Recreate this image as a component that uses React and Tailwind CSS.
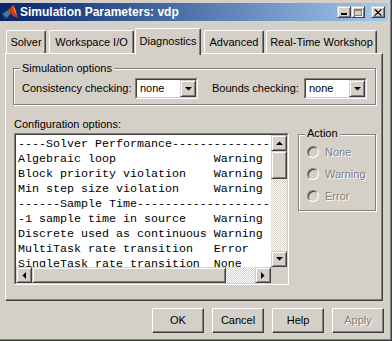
import React from 'react';

const raised =
  'border border-t-white border-l-white border-r-[#404040] border-b-[#404040] shadow-[inset_-1px_-1px_#808080]';
const raisedSmall =
  'border border-t-[#d4d0c8] border-l-[#d4d0c8] border-r-[#404040] border-b-[#404040] shadow-[inset_1px_1px_#fff,inset_-1px_-1px_#808080] bg-[#d4d0c8]';
const etched = 'border border-[#808080] shadow-[inset_1px_1px_#fff,1px_1px_#fff]';
const checker = 'bg-[repeating-conic-gradient(#fff_0_25%,#d4d0c8_0_50%)] bg-[length:2px_2px]';
const disabledText = 'text-[#808080] [text-shadow:1px_1px_0_#fff]';

const Arrow = ({ dir }) => {
  const pts = {
    up: '0,4 7,4 3.5,0.5',
    down: '0,0 7,0 3.5,3.5',
    left: '4,0 4,7 0.5,3.5',
    right: '0,0 0,7 3.5,3.5',
  }[dir];
  const horiz = dir === 'left' || dir === 'right';
  return (
    <svg width={horiz ? 4 : 7} height={horiz ? 7 : 4} viewBox={horiz ? '0 0 4 7' : '0 0 7 4'}>
      <polygon points={pts} fill="#000" />
    </svg>
  );
};

const ScrollBtn = ({ dir }) => (
  <div className={`${raisedSmall} w-[16px] h-[16px] flex items-center justify-center shrink-0`}>
    <Arrow dir={dir} />
  </div>
);

const Combo = ({ value }) => (
  <div className="w-[63px] h-[21px] border border-t-[#808080] border-l-[#808080] border-r-white border-b-white">
    <div className="h-full border border-t-[#404040] border-l-[#404040] border-r-[#d4d0c8] border-b-[#d4d0c8] bg-white flex items-center">
      <span className="flex-1 pl-[3px]">{value}</span>
      <div className={`${raisedSmall} w-[16px] h-[17px] flex items-center justify-center`}>
        <Arrow dir="down" />
      </div>
    </div>
  </div>
);

const Radio = ({ label }) => (
  <div className="flex items-center h-[22px]">
    <div className="w-[12px] h-[12px] rounded-full border border-t-[#808080] border-l-[#808080] border-r-white border-b-white bg-[#d4d0c8] shadow-[inset_1px_1px_#404040]" />
    <span className={`ml-[6px] ${disabledText}`}>{label}</span>
  </div>
);

// 36 columns fit in the visible part of the list
const lines = [
  '----Solver Performance--------------',
  'Algebraic loop              Warning',
  'Block priority violation    Warning',
  'Min step size violation     Warning',
  '------Sample Time-------------------',
  '-1 sample time in source    Warning',
  'Discrete used as continuous Warning',
  'MultiTask rate transition   Error',
  'SingleTask rate transition  None',
];

const tabs = [
  { label: 'Solver', w: 'w-[40px]', ml: 'ml-[6px]' },
  { label: 'Workspace I/O', w: 'w-[85px]', ml: 'ml-[3px]' },
  { label: 'Diagnostics', w: 'w-[66px]', ml: 'ml-[1px]', active: true },
  { label: 'Advanced', w: 'w-[60px]', ml: 'ml-[3px]' },
  { label: 'Real-Time Workshop', w: 'w-[111px]', ml: 'ml-[2px]' },
];

export default function App() {
  return (
    <div className="w-[392px] h-[341px] bg-[#d4d0c8] overflow-hidden text-black text-[11px] leading-[13px] font-['Liberation_Sans',Arial,sans-serif] shadow-[inset_-1px_-1px_#404040,inset_-2px_-2px_#808080] flex flex-col">
      {/* Title bar */}
      <div className="mt-[3px] mr-[4px] h-[18px] flex items-center bg-gradient-to-r from-[#0a246a] to-[#a6caf0]">
        <svg width="16" height="16" viewBox="0 0 16 16" className="ml-[2px] shrink-0">
          <polygon points="0,10 6,6 9,9 5,14" fill="#3f7f8f" />
          <polygon points="0,10 5,14 3,15" fill="#1f4f5f" />
          <polygon points="6,6 11,1 13,5 16,14 11,12 9,9" fill="#d53a12" />
          <polygon points="11,1 13,5 15,12 12,6" fill="#f6c21e" />
        </svg>
        <span className="ml-[2px] text-white font-bold text-[12px]">Simulation Parameters: vdp</span>
        <div className="ml-auto flex items-center mr-[3px]">
          <div className={`${raisedSmall} w-[14px] h-[12px] flex items-end pl-[3px] pb-[2px]`}>
            <div className="w-[6px] h-[2px] bg-black" />
          </div>
          <div className={`${raisedSmall} w-[14px] h-[12px] flex items-center justify-center`}>
            <div className="w-[8px] h-[7px] border border-[#808080] border-t-2 shadow-[1px_1px_#fff]" />
          </div>
          <div className={`${raisedSmall} w-[14px] h-[12px] ml-[6px] flex items-center justify-center`}>
            <svg width="8" height="7" viewBox="0 0 8 7">
              <path d="M0.5 0.5 L7 6.5 M1.5 0.5 L7.5 6.5 M7 0.5 L0.5 6.5 M7.5 0.5 L1 6.5" stroke="#000" strokeWidth="1" />
            </svg>
          </div>
        </div>
      </div>

      {/* Tabs */}
      <div className="mt-[7px] h-[25px] flex items-end relative z-10">
        {tabs.map((t) => (
          <div
            key={t.label}
            className={`${t.w} ${t.ml} shrink-0 border-l border-t border-white border-r border-r-[#404040] shadow-[inset_-1px_0_#808080] rounded-t-[2px] bg-[#d4d0c8] flex justify-center ${
              t.active ? 'h-[27px] -mb-[2px] pt-[6px]' : 'h-[23px] pt-[5px]'
            }`}
          >
            {t.label}
          </div>
        ))}
      </div>

      {/* Panel */}
      <div className="ml-[5px] w-[378px] h-[248px] border-l border-t border-white border-r border-b border-r-[#404040] border-b-[#404040] shadow-[inset_-1px_-1px_#808080] pl-[7px] pt-[14px]">
        {/* Simulation options */}
        <div className={`relative w-[363px] h-[37px] ${etched}`}>
          <span className="absolute left-[6px] -top-[7px] px-[2px] bg-[#d4d0c8]">Simulation options</span>
          <div className="flex items-center pl-[8px] pt-[9px]">
            <span className="w-[113px]">Consistency checking:</span>
            <Combo value="none" />
            <span className="ml-[14px] w-[92px]">Bounds checking:</span>
            <Combo value="none" />
          </div>
        </div>

        <div className="flex mt-[13px]">
          {/* Configuration options */}
          <div className="ml-[1px] flex flex-col">
            <span className="h-[13px]">Configuration options:</span>
            <div className="mt-[2px] w-[275px] h-[152px] border border-t-[#808080] border-l-[#808080] border-r-white border-b-white">
              <div className="h-full border border-t-[#404040] border-l-[#404040] border-r-[#d4d0c8] border-b-[#d4d0c8] bg-white grid grid-cols-[255px_16px] grid-rows-[132px_16px]">
                <div className="overflow-hidden whitespace-pre pl-[2px] pt-[2px] font-['Liberation_Mono','Courier_New',monospace] text-[11.67px] leading-[15px]">
                  {lines.map((l, i) => (
                    <div key={i}>{l}</div>
                  ))}
                </div>
                <div className="flex flex-col">
                  <ScrollBtn dir="up" />
                  <div className={`${raisedSmall} h-[28px]`} />
                  <div className={`flex-1 ${checker}`} />
                  <ScrollBtn dir="down" />
                </div>
                <div className="flex">
                  <ScrollBtn dir="left" />
                  <div className={`${raisedSmall} w-[194px]`} />
                  <div className={`flex-1 ${checker}`} />
                  <ScrollBtn dir="right" />
                </div>
                <div className="bg-[#d4d0c8]" />
              </div>
            </div>
          </div>

          {/* Action */}
          <div className={`relative ml-[9px] mt-[16px] w-[78px] h-[77px] ${etched} pl-[8px] pt-[6px]`}>
            <span className="absolute left-[6px] -top-[8px] px-[2px] bg-[#d4d0c8]">Action</span>
            <Radio label="None" />
            <Radio label="Warning" />
            <Radio label="Error" />
          </div>
        </div>
      </div>

      {/* Buttons */}
      <div className="mt-[7px] flex justify-end gap-[8px] pr-[8px]">
        {['OK', 'Cancel', 'Help', 'Apply'].map((b) => (
          <div
            key={b}
            className={`${raised} w-[52px] h-[25px] flex items-center justify-center ${b === 'Apply' ? disabledText : ''}`}
          >
            {b}
          </div>
        ))}
      </div>
    </div>
  );
}
